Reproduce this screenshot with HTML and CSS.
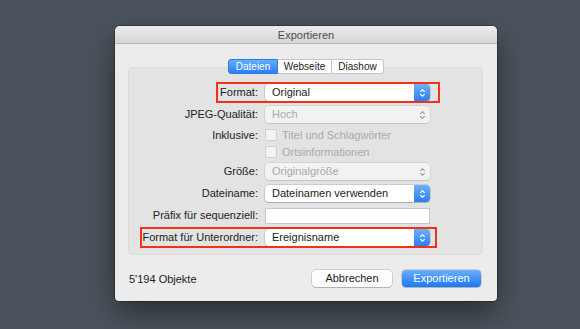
FILE: index.html
```html
<!DOCTYPE html>
<html lang="de">
<head>
  <meta charset="UTF-8">
  <title>Exportieren</title>
  <link rel="stylesheet" href="styles.css">
</head>
<body>

<div class="window">
  <div class="titlebar">Exportieren</div>

  <div class="tabs">
    <span class="tab active">Dateien</span>
    <span class="tab">Webseite</span>
    <span class="tab">Diashow</span>
  </div>

  <div class="panel">
    <div class="form">
      <label>Format:</label>
      <div class="popup"><span>Original</span><i class="stepper"><svg viewBox="0 0 8 10"><path d="M1.5 3.8 4 1.3 6.5 3.8M1.5 6.2 4 8.7 6.5 6.2"/></svg></i></div>

      <label>JPEG-Qualität:</label>
      <div class="popup disabled"><span>Hoch</span><i class="stepper"><svg viewBox="0 0 8 10"><path d="M1.5 3.8 4 1.3 6.5 3.8M1.5 6.2 4 8.7 6.5 6.2"/></svg></i></div>

      <label class="top">Inklusive:</label>
      <div class="checks">
        <div class="check"><i class="box"></i>Titel und Schlagwörter</div>
        <div class="check"><i class="box"></i>Ortsinformationen</div>
      </div>

      <label>Größe:</label>
      <div class="popup disabled"><span>Originalgröße</span><i class="stepper"><svg viewBox="0 0 8 10"><path d="M1.5 3.8 4 1.3 6.5 3.8M1.5 6.2 4 8.7 6.5 6.2"/></svg></i></div>

      <label>Dateiname:</label>
      <div class="popup"><span>Dateinamen verwenden</span><i class="stepper"><svg viewBox="0 0 8 10"><path d="M1.5 3.8 4 1.3 6.5 3.8M1.5 6.2 4 8.7 6.5 6.2"/></svg></i></div>

      <label>Präfix für sequenziell:</label>
      <div class="field"></div>

      <label>Format für Unterordner:</label>
      <div class="popup"><span>Ereignisname</span><i class="stepper"><svg viewBox="0 0 8 10"><path d="M1.5 3.8 4 1.3 6.5 3.8M1.5 6.2 4 8.7 6.5 6.2"/></svg></i></div>
    </div>

    <div class="mark mark-format"></div>
    <div class="mark mark-folder"></div>
  </div>

  <div class="footer">
    <span class="count">5'194 Objekte</span>
    <span class="btn">Abbrechen</span>
    <span class="btn primary">Exportieren</span>
  </div>
</div>

</body>
</html>
```

FILE: styles.css
```css
body {
  margin: 0;
  height: 329px;
  overflow: hidden;
  background: #4b535c;
  font-family: "Liberation Sans", Arial, sans-serif;
  font-size: 11px;
  color: #222;
}
.window {
  width: 382px;
  margin: 26px 0 0 115px;
  background: #ececec;
  border-radius: 5px 5px 4px 4px;
  box-shadow: 0 12px 30px rgba(0,0,0,0.45), 0 0 0 1px rgba(0,0,0,0.25);
  overflow: hidden;
}
.titlebar {
  height: 17px;
  line-height: 18px;
  text-align: center;
  font-size: 11px;
  color: #4d4d4d;
  background: linear-gradient(#ececec, #d6d6d6);
  border-bottom: 1px solid #b8b8b8;
}

/* segmented control */
.tabs {
  position: relative;
  z-index: 1;
  display: flex;
  justify-content: center;
  margin: 15px 0 -7px;
}
.tab {
  width: 53px;
  height: 13px;
  line-height: 13px;
  text-align: center;
  font-size: 10px;
  color: #222;
  background: #fff;
  border: 1px solid #c6c6c6;
  border-left: none;
}
.tab:last-child {
  width: 51px;
  border-radius: 0 3px 3px 0;
}
.tab.active {
  width: 48px;
  color: #fff;
  background: linear-gradient(#64acfb, #2b7ff6);
  border-color: #2a7bea;
  border-left: 1px solid #2a7bea;
  border-radius: 3px 0 0 3px;
}

.panel {
  position: relative;
  margin: 0 14px 0 13px;
  height: 186px;
  background: #e3e3e3;
  border: 1px solid #dcdcdc;
  border-radius: 4px;
}
.form {
  display: grid;
  grid-template-columns: 129px 165px;
  grid-template-rows: 17px 17px 30px 17px 17px 17px 17px;
  column-gap: 7px;
  row-gap: 5px;
  align-items: center;
  padding-top: 16px;
}
.form label {
  text-align: right;
  line-height: 17px;
}
.form label.top {
  align-self: start;
  line-height: 14px;
}

.popup {
  display: flex;
  align-items: center;
  height: 17px;
  background: #fff;
  border-radius: 4px;
  box-shadow: 0 0 0 0.5px rgba(0,0,0,0.2), 0 1px 1px rgba(0,0,0,0.15);
}
.popup span {
  flex: 1;
  padding-left: 7px;
  line-height: 17px;
}
.stepper {
  display: flex;
  align-items: center;
  justify-content: center;
  width: 16px;
  height: 17px;
  border-radius: 0 4px 4px 0;
  background: linear-gradient(#6db1fb, #2a7ef5);
}
.stepper svg {
  width: 7px;
  height: 10px;
  fill: none;
  stroke: #fff;
  stroke-width: 1.3;
}
.popup.disabled {
  background: #f2f2f2;
  color: #a9a9a9;
  box-shadow: 0 0 0 0.5px rgba(0,0,0,0.12), 0 1px 1px rgba(0,0,0,0.08);
}
.popup.disabled .stepper {
  background: none;
}
.popup.disabled .stepper svg {
  stroke: #9a9a9a;
}

.checks {
  display: flex;
  flex-direction: column;
  gap: 3px;
  align-self: start;
}
.check {
  display: flex;
  align-items: center;
  gap: 5px;
  height: 14px;
  color: #a9a9a9;
}
.box {
  width: 12px;
  height: 12px;
  box-sizing: border-box;
  background: #f3f3f3;
  border: 1px solid #cfcfcf;
  border-radius: 2px;
}

.field {
  height: 16px;
  margin-top: 1px;
  background: #fff;
  border: 1px solid #c9c9c9;
  box-sizing: border-box;
}

/* red highlight frames */
.mark {
  position: absolute;
  border: 2px solid #f2311a;
  box-sizing: border-box;
  height: 21px;
}
.mark-format {
  left: 87px;
  top: 14px;
  width: 224px;
}
.mark-folder {
  left: 11px;
  top: 159px;
  width: 297px;
}

.footer {
  display: flex;
  align-items: center;
  padding: 15px 16px 14px 14px;
}
.count {
  flex: 1;
}
.btn {
  width: 80px;
  height: 17px;
  line-height: 17px;
  text-align: center;
  background: #fff;
  border-radius: 4px;
  box-shadow: 0 0 0 0.5px rgba(0,0,0,0.25), 0 1px 1px rgba(0,0,0,0.15);
}
.btn.primary {
  width: 79px;
  margin-left: 10px;
  color: #fff;
  background: linear-gradient(#68b0fb, #1f78f4);
}
```
